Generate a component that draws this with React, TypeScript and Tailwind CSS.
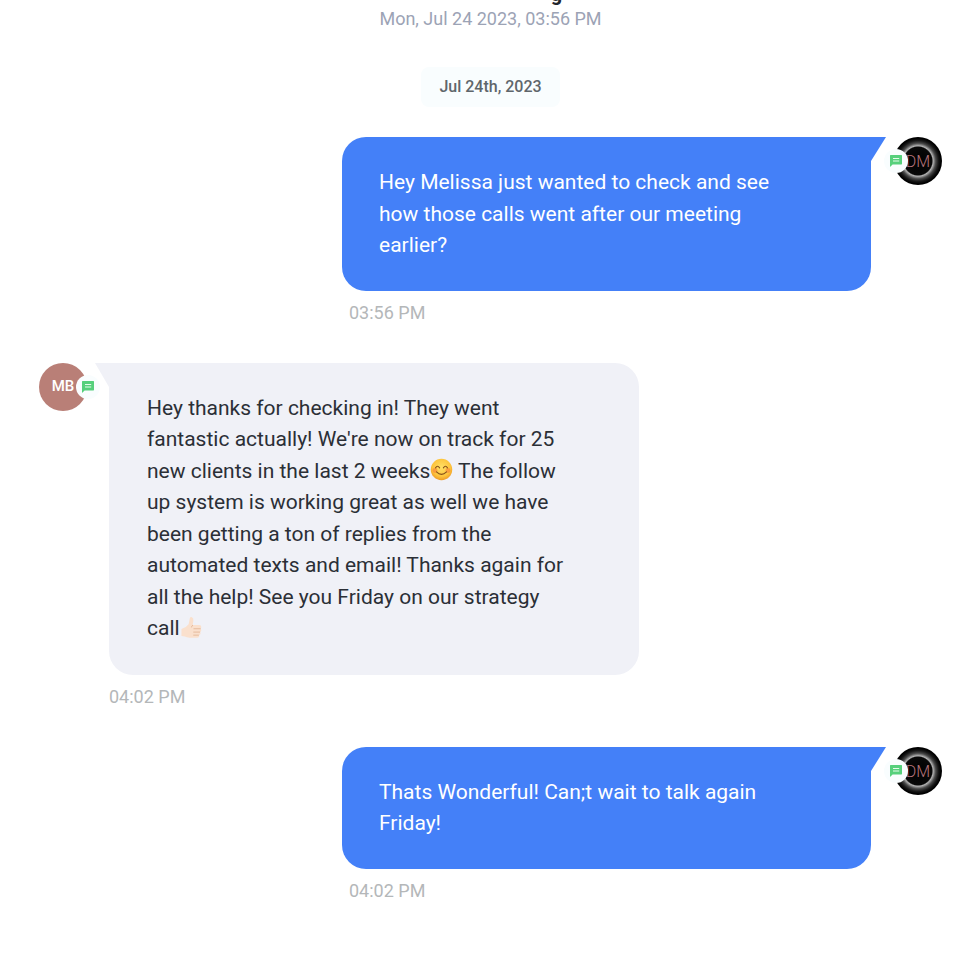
import type { ReactNode } from "react";

function ChatBadge({ className }: { className: string }) {
  return (
    <span className={`absolute top-3 flex size-6 items-center justify-center rounded-full bg-[#f9fdfe] ${className}`}>
      <svg viewBox="0 0 12 12" className="size-3" role="img" aria-label="SMS">
        <path d="M0 .6Q0 0 .6 0h10.8q.6 0 .6.6v8.2q0 .6-.6.6H2.6L0 12z" fill="#56d07c" />
        <path d="M3 3.5h6.200M3 6h6.200" stroke="#e4fbea" strokeWidth="1.100" />
      </svg>
    </span>
  );
}

function AgentAvatar() {
  return (
    <div className="relative size-12 shrink-0">
      <svg viewBox="0 0 48 48" className="size-12" role="img" aria-label="DM">
        <defs>
          <radialGradient id="halo">
            <stop offset="0" stopColor="#000" />
            <stop offset="0.58" stopColor="#080808" />
            <stop offset="0.63" stopColor="#b4b4b4" />
            <stop offset="0.67" stopColor="#8c8c8c" />
            <stop offset="0.74" stopColor="#4a4a4a" />
            <stop offset="0.85" stopColor="#181818" />
            <stop offset="0.95" stopColor="#000" />
          </radialGradient>
        </defs>
        <circle cx="24" cy="24" r="24" fill="url(#halo)" />
        <text x="24" y="30" textAnchor="middle" fontFamily="Roboto, sans-serif" fontSize="16" fontWeight="300" fill="#b8747c">
          DM
        </text>
      </svg>
      <ChatBadge className="-left-2.5" />
    </div>
  );
}

function ContactAvatar() {
  return (
    <div className="relative flex size-12 shrink-0 items-center justify-center rounded-full bg-[#b97f77] text-[15px] font-medium text-white">
      MB
      <ChatBadge className="-right-[13px]" />
    </div>
  );
}

function Sent({ time, children }: { time: string; children: ReactNode }) {
  return (
    <li className="flex items-start justify-end gap-[23px]">
      <div className="w-[529px]">
        <div className="relative rounded-3xl rounded-tr-none bg-[#4480f8] pt-[30px] pb-[29px] pr-16 pl-[37px] text-[21px] leading-normal text-white">
          <svg viewBox="0 0 15 24" className="absolute top-0 left-full h-6 w-[15px]" aria-hidden="true">
            <path d="M0 0h15L0 24z" fill="#4480f8" />
          </svg>
          <p>{children}</p>
        </div>
        <time className="mt-2 block pl-[7px] text-lg text-[#b4b7b9]">{time}</time>
      </div>
      <AgentAvatar />
    </li>
  );
}

function Received({ time, children }: { time: string; children: ReactNode }) {
  return (
    <li className="flex items-start gap-[22px]">
      <ContactAvatar />
      <div className="w-[530px]">
        <div className="relative rounded-3xl rounded-tl-none bg-[#f0f1f7] py-[30px] pr-16 pl-[38px] text-[21px] leading-normal text-[#2b2f36]">
          <svg viewBox="0 0 14 24" className="absolute top-0 right-full h-6 w-3.5" aria-hidden="true">
            <path d="M14 0H0l14 24z" fill="#f0f1f7" />
          </svg>
          <p>{children}</p>
        </div>
        <time className="mt-2 block text-lg text-[#b4b7b9]">{time}</time>
      </div>
    </li>
  );
}

function Smile() {
  return (
    <svg viewBox="0 0 24 24" className="inline size-[23px] align-[-3px]" role="img" aria-label="Smiling face">
      <defs>
        <radialGradient id="face" cx="0.5" cy="0.4" r="0.6">
          <stop offset="0" stopColor="#ffe066" />
          <stop offset="0.7" stopColor="#fdc43c" />
          <stop offset="1" stopColor="#ee9a25" />
        </radialGradient>
      </defs>
      <circle cx="12" cy="12" r="11.2" fill="url(#face)" />
      <circle cx="5.2" cy="13" r="2.6" fill="#f5803c" opacity=".6" />
      <circle cx="18.8" cy="13" r="2.6" fill="#f5803c" opacity=".6" />
      <path d="M5.800 10.300q2-3.400 4.200 0M14 10.300q2.200-3.400 4.200 0M6.800 14.500q5.200 5 10.400 0" fill="none" stroke="#85501a" strokeWidth="1.200" strokeLinecap="round" />
    </svg>
  );
}

function ThumbsUp() {
  return (
    <svg viewBox="0 0 24 24" className="inline size-[23px] align-[-4px]" role="img" aria-label="Thumbs up">
      <path d="M1.500 13.500q5-1.500 7.500-5L10.200 2.500q.5-1.800 2.200-1.200 2 .8 1.500 4l-.7 4.200h7q2 .2 2 2 0 1.200-.8 1.700.9.700.8 1.900-.1 1.200-1.200 1.700.6.700.4 1.700-.3 1.200-1.500 1.500.4.700 0 1.600-.5 1-2 1H10q-3 0-5-1.200l-3.500-.6z" fill="#fae0cd" />
      <path d="M13.200 9.600q-1 .4-1.200 1.900M14.500 13.300h6.700M14.300 16.800h6.200M14.300 20h5" fill="none" stroke="#e0b090" strokeWidth=".8" strokeLinecap="round" />
    </svg>
  );
}

export default function App() {
  return (
    <main className="min-h-screen overflow-hidden bg-white pr-[38px] pb-16 pl-[39px] font-['Roboto',sans-serif]">
      <header className="flex flex-col items-center">
        <h1 className="-mt-5 pl-[132px] text-xl leading-7 font-bold text-[#22262c]">g</h1>
        <p className="-mt-px text-lg leading-6 text-[#9ca3b5]">Mon, Jul 24 2023, 03:56 PM</p>
        <p className="mt-9 rounded-lg bg-[#f9fdfe] px-[18px] py-2 text-base leading-6 font-medium text-[#5f666b]">Jul 24th, 2023</p>
      </header>
      <ol className="mt-[30px] flex flex-col gap-9">
        <Sent time="03:56 PM">Hey Melissa just wanted to check and see how those calls went after our meeting earlier?</Sent>
        <Received time="04:02 PM">
          Hey thanks for checking in! They went fantastic actually! We're now on track for 25 new clients in the last 2 weeks
          <Smile /> The follow up system is working great as well we have been getting a ton of replies from the automated texts
          and email! Thanks again for all the help! See you Friday on our strategy call
          <ThumbsUp />
        </Received>
        <Sent time="04:02 PM">Thats Wonderful! Can;t wait to talk again Friday!</Sent>
      </ol>
    </main>
  );
}
